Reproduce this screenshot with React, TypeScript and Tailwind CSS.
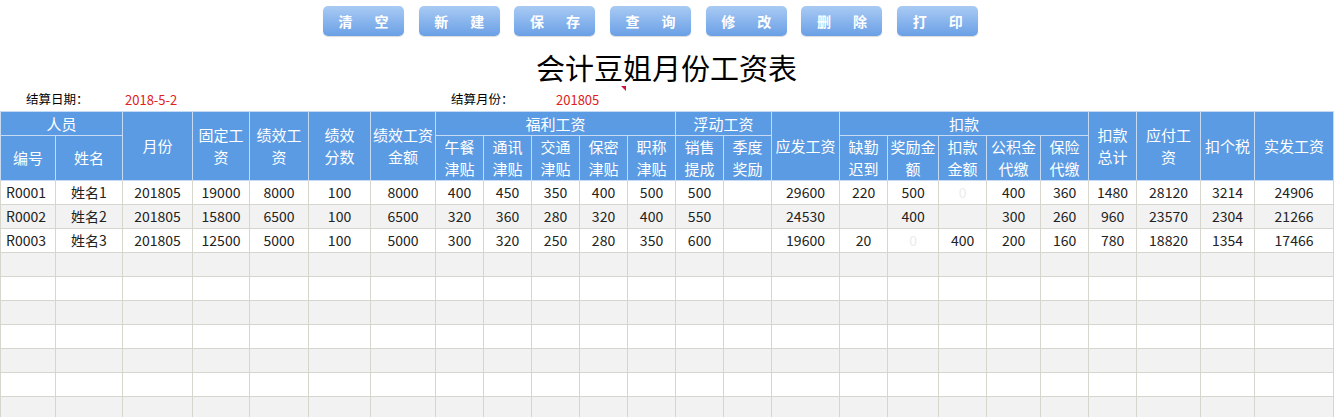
const font = { fontFamily: '"Noto Sans CJK SC", "Noto Sans", sans-serif' };

const widths = [55, 67, 70, 57, 59, 62, 65, 48, 48, 48, 48, 48, 48, 48, 68, 48, 51, 48, 54, 48, 48, 64, 54, 79];

const buttons = [
  ["清", "空"],
  ["新", "建"],
  ["保", "存"],
  ["查", "询"],
  ["修", "改"],
  ["删", "除"],
  ["打", "印"],
];

// "~0" marks a faded zero the sheet prints in near-white
const rows: string[][] = [
  ["R0001", "姓名1", "201805", "19000", "8000", "100", "8000", "400", "450", "350", "400", "500", "500", "", "29600", "220", "500", "~0", "400", "360", "1480", "28120", "3214", "24906"],
  ["R0002", "姓名2", "201805", "15800", "6500", "100", "6500", "320", "360", "280", "320", "400", "550", "", "24530", "", "400", "", "300", "260", "960", "23570", "2304", "21266"],
  ["R0003", "姓名3", "201805", "12500", "5000", "100", "5000", "300", "320", "250", "280", "350", "600", "", "19600", "20", "~0", "400", "200", "160", "780", "18820", "1354", "17466"],
];

const th = "border border-[#c6dbf3] bg-[#5b9be3] text-white font-normal text-[15px] leading-[22px] text-center align-middle p-0";
const td = "border border-[#d6d6cc] h-[24px] p-0 text-center align-middle text-[14px] leading-[23px] text-[#222]";

export default function App() {
  const empty = Array.from({ length: 8 });
  return (
    <div className="w-[1341px] h-[417px] overflow-hidden bg-white" style={font}>
      {/* Toolbar */}
      <div className="flex gap-[14.7px] pl-[323px] pt-[6px]">
        {buttons.map(([a, b]) => (
          <div
            key={a}
            className="w-[81px] h-[30px] rounded-[5px] bg-gradient-to-b from-[#a9cbf3] to-[#6a9fe6] flex items-center justify-center gap-[22px] text-white font-bold text-[14px] shadow-[0_1px_1px_rgba(0,0,0,0.15)]"
          >
            <span>{a}</span>
            <span>{b}</span>
          </div>
        ))}
      </div>

      {/* Title */}
      <div className="w-[1333px] text-center text-[29px] leading-[36px] text-black mt-[13px]">会计豆姐月份工资表</div>

      {/* Info line */}
      <div className="relative flex items-center h-[26px] pt-[3px] text-[12.5px] w-[1333px]">
        <span className="ml-[26px] w-[99px] text-black">结算日期：</span>
        <span className="w-[326px] text-[13px] text-[#e0201c]">2018-5-2</span>
        <span className="w-[105px] text-black">结算月份：</span>
        <span className="text-[13px] text-[#e0201c]">201805</span>
        <span className="absolute left-[621px] top-[1px] w-0 h-0 border-t-[5px] border-l-[5px] border-t-[#d0103a] border-l-transparent" />
      </div>

      {/* Table */}
      <table className="table-fixed border-collapse w-[1333px]">
        <colgroup>
          {widths.map((w, i) => (
            <col key={i} style={{ width: w }} />
          ))}
        </colgroup>
        <thead>
          <tr className="h-[24px]">
            <th colSpan={2} className={th}>人员</th>
            <th rowSpan={2} className={th}>月份</th>
            <th rowSpan={2} className={th}>固定工<br />资</th>
            <th rowSpan={2} className={th}>绩效工<br />资</th>
            <th rowSpan={2} className={th}>绩效<br />分数</th>
            <th rowSpan={2} className={th}>绩效工资<br />金额</th>
            <th colSpan={5} className={th}>福利工资</th>
            <th colSpan={2} className={th}>浮动工资</th>
            <th rowSpan={2} className={th}>应发工资</th>
            <th colSpan={5} className={th}>扣款</th>
            <th rowSpan={2} className={th}>扣款<br />总计</th>
            <th rowSpan={2} className={th}>应付工<br />资</th>
            <th rowSpan={2} className={th}>扣个税</th>
            <th rowSpan={2} className={th}>实发工资</th>
          </tr>
          <tr className="h-[44px]">
            <th className={th}>编号</th>
            <th className={th}>姓名</th>
            <th className={th}>午餐<br />津贴</th>
            <th className={th}>通讯<br />津贴</th>
            <th className={th}>交通<br />津贴</th>
            <th className={th}>保密<br />津贴</th>
            <th className={th}>职称<br />津贴</th>
            <th className={th}>销售<br />提成</th>
            <th className={th}>季度<br />奖励</th>
            <th className={th}>缺勤<br />迟到</th>
            <th className={th}>奖励金<br />额</th>
            <th className={th}>扣款<br />金额</th>
            <th className={th}>公积金<br />代缴</th>
            <th className={th}>保险<br />代缴</th>
          </tr>
        </thead>
        <tbody>
          {rows.map((r, i) => (
            <tr key={i} className={i % 2 === 1 ? "bg-[#f2f2f2]" : "bg-white"}>
              {r.map((c, j) => (
                <td
                  key={j}
                  className={`${td} ${j === 0 ? "text-left pl-[5px]" : ""} ${c === "~0" ? "text-[#ececec]" : ""}`}
                >
                  {c === "~0" ? "0" : c}
                </td>
              ))}
            </tr>
          ))}
          {empty.map((_, i) => (
            <tr key={`e${i}`} className={i % 2 === 0 ? "bg-[#f2f2f2]" : "bg-white"}>
              {widths.map((_, j) => (
                <td key={j} className={td} />
              ))}
            </tr>
          ))}
        </tbody>
      </table>
    </div>
  );
}
